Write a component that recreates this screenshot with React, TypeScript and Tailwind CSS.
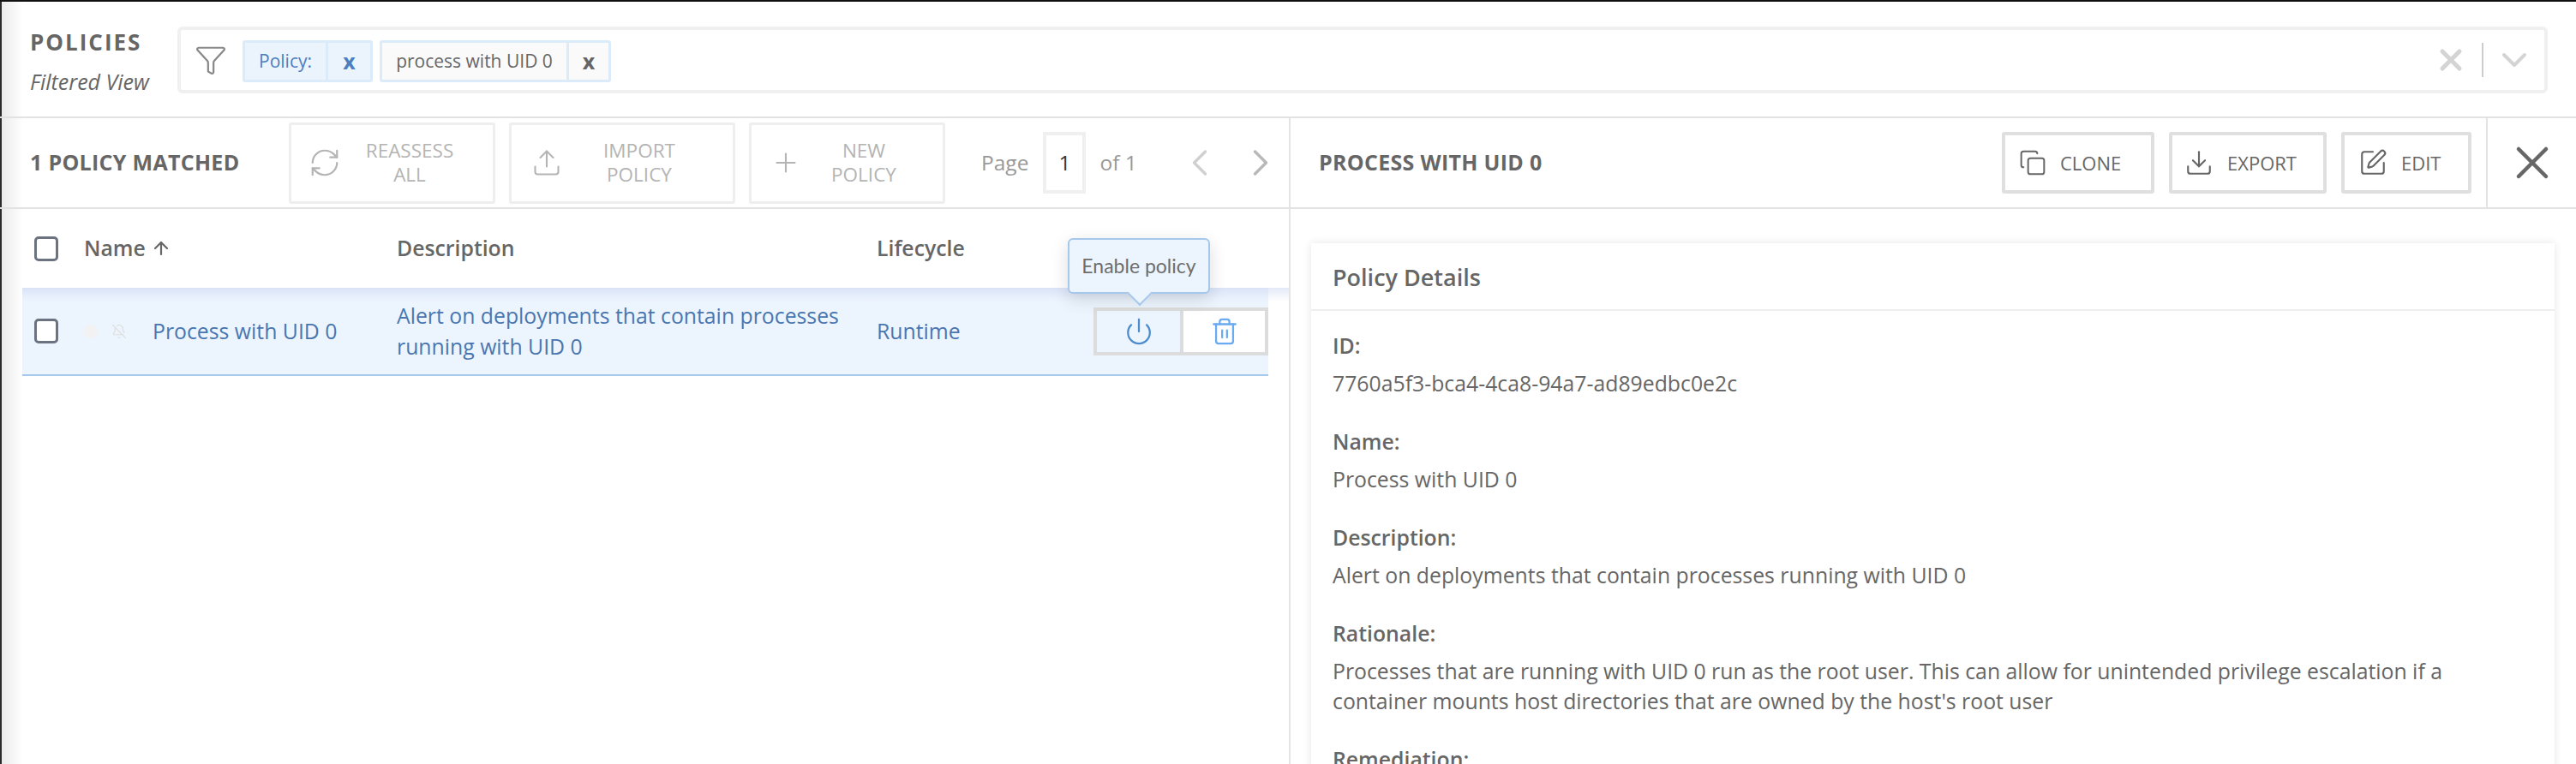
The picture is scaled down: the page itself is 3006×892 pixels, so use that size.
import { ArrowUp, BellOff, ChevronDown, ChevronLeft, ChevronRight, Copy, Download, Funnel, Plus, Power, RefreshCw, SquarePen, Trash2, Upload, X } from "lucide-react";

const fields = [
  { label: "ID:", value: "7760a5f3-bca4-4ca8-94a7-ad89edbc0e2c" },
  { label: "Name:", value: "Process with UID 0" },
  { label: "Description:", value: "Alert on deployments that contain processes running with UID 0" },
  {
    label: "Rationale:",
    value:
      "Processes that are running with UID 0 run as the root user. This can allow for unintended privilege escalation if a container mounts host directories that are owned by the host's root user",
  },
  { label: "Remediation:", value: "" },
];

const GhostButton = ({ icon, top, bottom, className }: { icon: React.ReactNode; top: string; bottom: string; className: string }) => (
  <div className={`flex h-[95px] items-center rounded-[3px] border-[3px] border-[#eeeeee] text-[#b4b4b4] ${className}`}>
    {icon}
    <div className="flex-1 text-center text-[22.5px] leading-[28px]">
      <div>{top}</div>
      <div>{bottom}</div>
    </div>
  </div>
);

const ActionButton = ({ icon, label, className }: { icon: React.ReactNode; label: string; className: string }) => (
  <div className={`flex h-[72px] items-center gap-[16px] rounded-[3px] border-[4px] border-[#dfdfdf] text-[22px] text-[#666666] ${className}`}>
    {icon}
    <span>{label}</span>
  </div>
);

export default function App() {
  return (
    <div className="relative h-[892px] overflow-hidden border-t-2 border-[#111111] bg-white font-['Open_Sans',sans-serif] text-[#666666]">
      <div className="absolute inset-y-0 left-0 w-[26px] bg-gradient-to-r from-[#e9e9e9] to-white" />
      <div className="absolute inset-y-0 left-0 w-[2px] bg-[#2a2a2a]" />

      <header className="relative flex h-[136px] items-center border-b-[2px] border-[#e2e2e2] pl-[35px] pr-[33px]">
        <div className="mt-[6px] w-[172px] shrink-0">
          <div className="text-[26px] font-bold leading-[36px] tracking-[2px]">POLICIES</div>
          <div className="mt-[10px] text-[25px] italic leading-[36px]">Filtered View</div>
        </div>
        <div className="mt-[2px] flex h-[78px] flex-1 items-center rounded-[6px] border-[4px] border-[#f0f0f0] pl-[16px] pr-[11px]">
          <Funnel size={38} strokeWidth={1.4} className="text-[#888888]" />
          <div className="ml-[18px] mt-[3px] flex h-[49px] items-stretch rounded-[3px] border-[3px] border-[#dcebf9] bg-[#ebf4fd] text-[21px] text-[#4c7fbd]">
            <span className="flex w-[97px] items-center justify-center border-r-[3px] border-[#dcebf9]">Policy:</span>
            <span className="flex w-[49px] items-center justify-center text-[25px] font-bold leading-none">x</span>
          </div>
          <div className="ml-[8px] mt-[3px] flex h-[49px] items-stretch rounded-[3px] border-[3px] border-[#dcebf9] bg-[#fafafa] text-[21px] text-[#666666]">
            <span className="flex w-[218px] items-center justify-center whitespace-nowrap border-r-[3px] border-[#dcebf9]">process with UID 0</span>
            <span className="flex w-[46px] items-center justify-center text-[25px] font-bold leading-none">x</span>
          </div>
          <div className="ml-auto flex items-center text-[#d4d4d4]">
            <X size={40} strokeWidth={3} />
            <div className="ml-[16px] h-[40px] w-[2px] bg-[#cccccc]" />
            <ChevronDown size={48} strokeWidth={2} className="ml-[12px]" />
          </div>
        </div>
      </header>

      <div className="relative flex h-[106px] border-b-[2px] border-[#e2e2e2]">
        <div className="flex w-[1506px] shrink-0 items-center border-r-[2px] border-[#e4e4e4] pl-[35px]">
          <div className="w-[302px] shrink-0 text-[25px] font-bold tracking-[0.3px]">1 POLICY MATCHED</div>
          <GhostButton className="w-[241px] pl-[20px] pr-[17px]" icon={<RefreshCw size={38} strokeWidth={1.4} />} top="REASSESS" bottom="ALL" />
          <GhostButton className="ml-[16px] w-[264px] pl-[23px] pr-[19px]" icon={<Upload size={36} strokeWidth={1.4} />} top="IMPORT" bottom="POLICY" />
          <GhostButton className="ml-[16px] w-[229px] pl-[22px] pr-[19px]" icon={<Plus size={36} strokeWidth={1.4} />} top="NEW" bottom="POLICY" />
          <span className="ml-[42px] text-[24.5px] text-[#999999]">Page</span>
          <div className="ml-[17px] flex h-[72px] w-[50px] items-center justify-center border-[4px] border-[#f0f0f0] text-[24.5px] text-[#333333]">1</div>
          <span className="ml-[16px] text-[24.5px] text-[#999999]">of 1</span>
          <ChevronLeft size={52} strokeWidth={1.6} className="ml-[47px] text-[#d0d0d0]" />
          <ChevronRight size={52} strokeWidth={1.6} className="ml-[19px] text-[#b8b8b8]" />
        </div>
        <div className="flex flex-1 items-center pl-[33px]">
          <div className="flex-1 text-[25px] font-bold tracking-[0.3px]">PROCESS WITH UID 0</div>
          <ActionButton className="w-[178px] pl-[16px]" icon={<Copy size={32} strokeWidth={1.5} />} label="CLONE" />
          <ActionButton className="ml-[17px] w-[184px] pl-[14px]" icon={<Download size={34} strokeWidth={1.5} />} label="EXPORT" />
          <ActionButton className="ml-[17px] w-[152px] pl-[16px]" icon={<SquarePen size={34} strokeWidth={1.5} />} label="EDIT" />
          <div className="ml-[17px] flex h-full w-[105px] items-center justify-center border-l-[2px] border-[#e4e4e4]">
            <X size={64} strokeWidth={1.7} />
          </div>
        </div>
      </div>

      <div className="relative flex">
        <div className="relative h-[660px] w-[1506px] shrink-0 border-r-[2px] border-[#e4e4e4] pl-[26px]">
          <div className="flex h-[92px] w-[1454px] items-center text-[24.8px] font-semibold">
            <div className="ml-[14px] h-[29px] w-[28px] rounded-[5px] border-[3px] border-[#6b7280] bg-white" />
            <div className="ml-[30px] flex w-[365px] items-center gap-[6px]">Name <ArrowUp size={24} strokeWidth={2.2} /></div>
            <div className="w-[560px]">Description</div>
            <div>Lifecycle</div>
          </div>
          <div className="flex h-[103px] w-[1454px] items-center border-b-[2px] border-[#a6c8ea] bg-[#ecf5fe] text-[24.8px] text-[#4a76b0]">
            <div className="ml-[14px] h-[29px] w-[28px] rounded-[5px] border-[3px] border-[#6b7280] bg-white" />
            <div className="ml-[30px] h-[16px] w-[16px] rounded-full bg-[#f2f2f2]" />
            <BellOff size={18} strokeWidth={1.5} className="ml-[16px] text-[#dddddd]" />
            <div className="ml-[30px] w-[285px]">Process with UID 0</div>
            <div className="-mt-[2px] w-[560px] leading-[36px]">Alert on deployments that contain processes running with UID 0</div>
            <div className="w-[253px]">Runtime</div>
            <div className="flex h-[56px] w-[204px] border-[4px] border-[#dcdcdc]">
              <div className="flex w-[101px] items-center justify-center border-r-[4px] border-[#dcdcdc]">
                <Power size={34} strokeWidth={1.6} className="text-[#4c8ccc]" />
              </div>
              <div className="flex flex-1 items-center justify-center bg-white">
                <Trash2 size={34} strokeWidth={1.6} className="text-[#6aaaf0]" />
              </div>
            </div>
          </div>
          <div className="absolute left-[26px] right-0 top-[92px] h-[16px] bg-gradient-to-b from-[#c9d3f0]/50 to-transparent" />
          <div className="absolute left-[1246px] top-[34px] flex h-[65px] w-[166px] items-center justify-center rounded-[6px] border-[2px] border-[#a6c8ea] bg-[#ecf5fe] font-['Lato',sans-serif] text-[23px] text-[#6d6d6d] shadow-[0_6px_20px_rgba(0,0,0,0.14)]">
            Enable policy
            <div className="absolute left-[72px] top-[53px] h-[20px] w-[20px] rotate-45 border-b-[2px] border-r-[2px] border-[#a6c8ea] bg-[#ecf5fe]" />
          </div>
        </div>
        <div className="flex-1 pl-[24px] pr-[25px] pt-[40px]">
          <div className="h-[640px] bg-white shadow-[0_0_10px_rgba(0,0,0,0.1)]">
            <div className="flex h-[79px] items-center border-b-[2px] border-[#eeeeee] pl-[25px] pt-[4px] text-[27px] font-semibold">Policy Details</div>
            <div className="px-[25px] pt-[23px] text-[24.8px] leading-[35px]">
              {fields.map((field) => (
                <div key={field.label} className="mb-[33px]">
                  <div className="font-semibold">{field.label}</div>
                  <div className="mt-[9px]">{field.value}</div>
                </div>
              ))}
            </div>
          </div>
        </div>
      </div>
    </div>
  );
}
